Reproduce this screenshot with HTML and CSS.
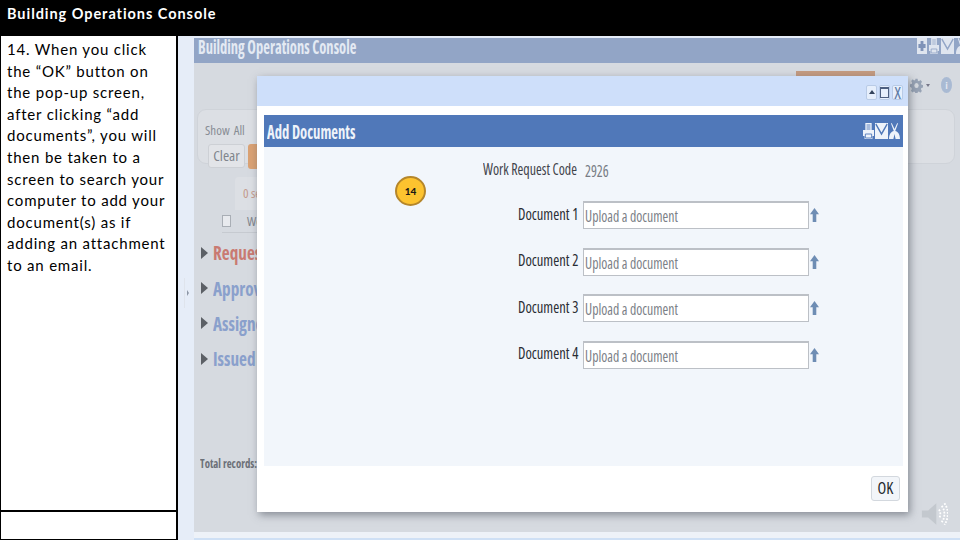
FILE: index.html
```html
<!DOCTYPE html>
<html lang="en">
<head>
<meta charset="utf-8">
<title>Building Operations Console</title>
<link rel="stylesheet" href="styles.css">
</head>
<body>
<div class="slide">
  <header class="slide-head">Building Operations Console</header>
  <div class="slide-body">
    <aside class="notes">
      <div class="notes-main">14. When you click the “OK” button on the pop-up screen, after clicking “add documents”, you will then be taken to a screen to search your computer to add your document(s) as if adding an attachment to an email.</div>
      <div class="notes-foot"></div>
    </aside>
    <main class="shot">
      <div class="rail"><span class="rail-handle"></span></div>
      <div class="app">
        <div class="app-title">
          <span class="narrow app-title-text">Building Operations Console</span>
          <span class="app-icons">
            <svg class="icon-s" viewBox="0 0 14 16" preserveAspectRatio="none"><rect width="14" height="16" fill="#dfe5ef"/><path d="M5 3h4v3h3v4H9v3H5v-3H2V6h3z" fill="#7f93b8"/></svg>
            <svg class="icon-s" viewBox="0 0 14 16" preserveAspectRatio="none"><path d="M3 0h8v7h3v6h-2v3H2v-3H0V7h3z" fill="#dfe5ef"/><path d="M4.500 2h5M4.500 4h5M4.500 6h5M3 11h8v4H3z" fill="none" stroke="#92a5c6"/></svg>
            <svg class="icon-s wide" viewBox="0 0 16 16" preserveAspectRatio="none"><rect width="16" height="16" fill="#dfe5ef"/><path d="M1 1l7 10 7-10" fill="none" stroke="#92a5c6" stroke-width="1.6"/></svg>
            <svg class="icon-s" viewBox="0 0 12 16" preserveAspectRatio="none"><path d="M3 0l3 6 3-6 .8.500L6.800 8C9.500 8.500 12 11 12 16H7.200L6 11l-1.200 5H0c0-5 2.500-7.500 5.200-8L2.200.5z" fill="#dfe5ef"/></svg>
          </span>
        </div>
        <div class="app-body">
          <div class="orange-tab"></div>
          <div class="tools">
            <svg class="gear" viewBox="0 0 24 24" preserveAspectRatio="none"><path d="M10 1h4l.6 3.2 2 .8L19.300 3.200l2.800 2.800-1.800 2.700.8 2 3 .6v4l-3.200.6-.8 2 1.800 2.700-2.800 2.800-2.700-1.800-2 .8-.6 3h-4l-.6-3.200-2-.8-2.700 1.800-2.800-2.800 1.800-2.700-.8-2L0 14v-4l3.200-.6.800-2L2.200 4.700 5 2l2.700 1.800 2-.8z" fill="#97a3b5"/><circle cx="12" cy="12" r="4" fill="#d6dae0"/></svg>
            <span class="caret"></span>
            <span class="info"><span class="info-i">i</span></span>
          </div>
          <section class="filter">
            <div class="filter-row narrow"><span>Show</span><span>All</span></div>
            <div class="filter-btns">
              <span class="btn-clear narrow">Clear</span>
              <span class="btn-orange"></span>
            </div>
          </section>
          <div class="sel narrow">0 selected</div>
          <div class="col-row narrow"><span class="check"></span><span>Work</span></div>
          <ul class="groups narrow">
            <li class="red"><i class="tri"></i><span class="squeeze">Requests</span></li>
            <li><i class="tri"></i><span class="squeeze">Approved</span></li>
            <li><i class="tri"></i><span class="squeeze">Assigned</span></li>
            <li><i class="tri"></i><span class="squeeze">Issued and</span></li>
          </ul>
          <div class="total narrow">Total records:</div>
        </div>
        <div class="app-foot"></div>
      </div>
      <section class="modal">
        <div class="modal-bar">
          <span class="win-btn"><i class="win-up"></i></span>
          <span class="win-btn"><i class="win-max"></i></span>
          <span class="win-btn narrow win-x">X</span>
        </div>
        <div class="modal-sheet">
          <div class="panel">
            <div class="panel-head">
              <span class="narrow panel-title">Add Documents</span>
              <span class="panel-icons">
                <svg class="picon" viewBox="0 0 14 16" preserveAspectRatio="none"><path d="M3 0h8v7h3v6h-2v3H2v-3H0V7h3z" fill="#eef3fa"/><path d="M4.500 2h5M4.500 4h5M4.500 6h5M3 11h8v4H3z" fill="none" stroke="#5078b9"/></svg>
                <svg class="picon wide" viewBox="0 0 16 16" preserveAspectRatio="none"><rect width="16" height="16" fill="#eef3fa"/><path d="M1 1l7 10 7-10" fill="none" stroke="#5078b9" stroke-width="1.6"/></svg>
                <svg class="picon" viewBox="0 0 12 16" preserveAspectRatio="none"><path d="M3 0l3 6 3-6 .8.500L6.800 8C9.500 8.500 12 11 12 16H7.200L6 11l-1.200 5H0c0-5 2.500-7.500 5.200-8L2.200.5z" fill="#eef3fa"/></svg>
              </span>
            </div>
            <form class="form">
              <div class="code-row narrow"><span class="code-label"><span class="squeeze">Work Request Code</span></span><span class="code-val"><span class="squeeze">2926</span></span></div>
              <div class="doc-row"><label class="narrow doc-label">Document 1</label><span class="doc-input narrow"><span class="squeeze">Upload a document</span></span><svg class="up" viewBox="0 0 10 16" preserveAspectRatio="none"><path d="M5 0l5 7H7v9H3V7H0z" fill="#6e8db4"/></svg></div>
              <div class="doc-row"><label class="narrow doc-label">Document 2</label><span class="doc-input narrow"><span class="squeeze">Upload a document</span></span><svg class="up" viewBox="0 0 10 16" preserveAspectRatio="none"><path d="M5 0l5 7H7v9H3V7H0z" fill="#6e8db4"/></svg></div>
              <div class="doc-row"><label class="narrow doc-label">Document 3</label><span class="doc-input narrow"><span class="squeeze">Upload a document</span></span><svg class="up" viewBox="0 0 10 16" preserveAspectRatio="none"><path d="M5 0l5 7H7v9H3V7H0z" fill="#6e8db4"/></svg></div>
              <div class="doc-row"><label class="narrow doc-label">Document 4</label><span class="doc-input narrow"><span class="squeeze">Upload a document</span></span><svg class="up" viewBox="0 0 10 16" preserveAspectRatio="none"><path d="M5 0l5 7H7v9H3V7H0z" fill="#6e8db4"/></svg></div>
            </form>
          </div>
          <div class="modal-foot"><span class="ok narrow">OK</span></div>
        </div>
      </section>
      <div class="badge">14</div>
      <svg class="speaker" viewBox="0 0 30 28"><path d="M1 10h7l9-8v24l-9-8H1z" fill="#c3c8ce"/><g fill="none" stroke="#fff" stroke-width="2" stroke-dasharray="2 1.500"><path d="M20 9c2 3 2 7 0 10"/><path d="M23 5c4 5 4 13 0 18"/><path d="M26 2c5 7 5 17 0 24"/></g></svg>
    </main>
  </div>
</div>
</body>
</html>
```
FILE: styles.css
```css
* { box-sizing: border-box; }
html, body { margin: 0; padding: 0; }
body { width: 960px; height: 540px; overflow: hidden; background: #000; font-family: Lato, "Open Sans", sans-serif; }
.slide { width: 960px; height: 540px; display: flex; flex-direction: column; background: #000; }
.slide-head { height: 36px; flex: none; padding: 4px 7px 0; color: #fff; font-size: 14.500px; font-weight: 700; line-height: 20px; letter-spacing: .95px; }
.slide-body { flex: 1; display: flex; min-height: 0; }

.notes { width: 178px; flex: none; display: flex; flex-direction: column; background: #fff; border-left: 1px solid #000; border-right: 2px solid #000; border-bottom: 1px solid #000; }
.notes-main { height: 476px; flex: none; padding: 3px 5px 0 6px; font-size: 15px; line-height: 21.600px; letter-spacing: .8px; color: #000; border-bottom: 2px solid #000; }
.notes-foot { flex: 1; }

.shot { flex: 1; position: relative; display: flex; background: #e6edf8; padding-top: 2px; }
.rail { width: 16px; flex: none; display: flex; align-items: center; }
.rail-handle { position: relative; width: 5px; height: 30px; margin: 8px 0 0 6px; border-left: 1px solid #dfe4ec; }
.rail-handle::after { content: ""; position: absolute; left: 2px; top: 12px; border-top: 3px solid transparent; border-bottom: 3px solid transparent; border-left: 2px solid #8d97a6; }
.app { flex: 1; display: flex; flex-direction: column; min-width: 0; }
.app-title { height: 25px; flex: none; background: #92a5c6; display: flex; justify-content: space-between; padding-left: 4px; }
.narrow { display: inline-block; font-family: "Open Sans", sans-serif; font-stretch: 75%; }
.squeeze { display: inline-block; transform: scaleX(.86); transform-origin: left center; white-space: nowrap; }
.app-title-text { color: #e4eaf3; font-size: 19px; font-weight: 700; line-height: 26px; height: 26px; margin-top: -4px; white-space: nowrap; transform: scaleX(.765); transform-origin: left center; }
.app-icons { display: flex; gap: 2px; flex: none; margin-right: -6px; }
.icon-s { width: 10px; height: 16px; }
.icon-s.wide { width: 13px; }
.app-body { flex: 1; position: relative; background: #d6dae0; }
.app-foot { height: 8px; flex: none; background: #eef2f8; border-bottom: 2px solid #cfe0f5; }
.orange-tab { position: absolute; left: 602px; top: 8px; width: 79px; height: 8px; background: #c59b81; }
.tools { position: absolute; left: 716px; top: 14px; display: flex; align-items: center; gap: 3px; }
.gear { width: 13px; height: 15px; }
.caret { width: 0; height: 0; border-left: 2.500px solid transparent; border-right: 2.500px solid transparent; border-top: 3px solid #778; margin-right: 8px; }
.info { width: 11px; height: 16px; border-radius: 50%; background: #a9bad3; display: flex; align-items: center; justify-content: center; }
.info-i { font-size: 10px; line-height: 1; color: #e4e9f1; font-weight: 700; }
.filter { position: absolute; left: 3px; top: 46px; width: 758px; height: 55px; background: #dcdfe4; border: 1px solid #cfd3d9; border-radius: 9px; padding: 13px 0 0 7px; }
.filter-row { display: flex; gap: 4px; color: #888d95; font-size: 13px; line-height: 15px; }
.filter-btns { display: flex; gap: 3px; margin-top: 6px; margin-left: 3px; }
.btn-clear { width: 37px; height: 24px; background: #e2e4e8; border: 1px solid #cdd0d5; border-radius: 3px; color: #80858c; font-size: 15px; line-height: 21px; text-align: center; }
.btn-orange { width: 20px; height: 25px; background: #daa274; border-radius: 3px; }
.sel { position: absolute; left: 41px; top: 114px; width: 40px; height: 33px; background: #dcdfe4; border-radius: 4px 4px 0 0; padding: 7px 0 0 8px; color: #c49a8c; font-size: 13px; white-space: nowrap; }
.col-row { position: absolute; left: 28px; top: 147px; width: 60px; height: 23px; display: flex; gap: 16px; align-items: center; color: #7f848c; font-size: 13px; border-bottom: 1px solid #c6cad0; }
.check { width: 9px; height: 12px; background: #e8eaee; border: 1px solid #a9aeb5; }
.groups { position: absolute; left: 7px; top: 172px; margin: 0; padding: 0; list-style: none; display: block; }
.groups li { height: 35.400px; display: flex; align-items: center; gap: 5px; color: #8aa0cc; font-size: 20px; font-weight: 700; white-space: nowrap; }
.groups li.red { color: #c97a72; }
.tri { width: 0; height: 0; flex: none; border-top: 6px solid transparent; border-bottom: 6px solid transparent; border-left: 7px solid #5c6066; }
.total { position: absolute; left: 6px; top: 392px; color: #6c7078; font-size: 12px; font-weight: 700; white-space: nowrap; transform: scaleX(.9); transform-origin: left center; }

.modal { position: absolute; left: 79px; top: 40px; width: 651px; height: 436px; background: #fff; display: flex; flex-direction: column; box-shadow: 2px 3px 8px rgba(70,75,85,.55); }
.modal-bar { height: 30px; flex: none; background: #cedffa; display: flex; justify-content: flex-end; align-items: center; gap: 2px; padding: 0 5px 0 0; }
.win-btn { width: 11px; height: 15px; margin-top: 2px; background: #e6effc; border: 1px solid #b9cbe6; border-radius: 2px; display: flex; align-items: center; justify-content: center; color: #5f7ba6; }
.win-up { width: 0; height: 0; border-left: 3px solid transparent; border-right: 3px solid transparent; border-bottom: 4px solid #33435c; }
.win-max { width: 9px; height: 11px; border: 1px solid #4d5f80; border-top-width: 2px; }
.win-x { font-size: 17px; line-height: 13px; text-align: center; }
.modal-sheet { flex: 1; display: flex; flex-direction: column; padding: 9px 5px 0 7px; min-height: 0; }
.panel { height: 351px; flex: none; background: #f2f6fb; display: flex; flex-direction: column; }
.panel-head { height: 32px; flex: none; background: #5078b9; display: flex; justify-content: space-between; align-items: center; padding: 2px 3px 0 3px; }
.panel-title { color: #eef3fa; font-size: 19px; font-weight: 700; white-space: nowrap; transform: scaleX(.77); transform-origin: left center; }
.panel-icons { display: flex; gap: 1px; margin-top: -2px; }
.picon { width: 11px; height: 16px; }
.picon.wide { width: 13px; }
.form { display: flex; flex-direction: column; padding: 10px 0 0 219px; }
.code-row { height: 25px; display: flex; align-items: center; white-space: nowrap; }
.code-label { width: 102px; color: #3f434a; font-size: 16px; margin-top: -2px; }
.code-val { color: #777c84; font-size: 16px; margin-top: 2px; }
.code-row .squeeze { transform: scaleX(.87); }
.doc-row { height: 28px; margin-top: 18.600px; display: flex; align-items: center; }
.code-row + .doc-row { margin-top: 19px; }
.doc-label { width: 99px; text-align: right; padding: 0 4px 3px 0; color: #2a2d33; font-size: 16px; white-space: nowrap; transform: scaleX(.91); transform-origin: right center; }
.doc-input { width: 226px; margin-left: 1px; height: 28px; background: #fff; border: 1px solid #bcc0c6; border-top-width: 2px; padding-left: 1px; color: #7b8087; font-size: 16px; line-height: 27px; white-space: nowrap; overflow: hidden; }
.up { width: 9px; height: 14px; margin-left: 1px; }
.modal-foot { flex: 1; display: flex; justify-content: flex-end; align-items: flex-start; padding: 10px 3px 0 0; }
.ok { width: 29px; height: 25px; background: #f2f5f9; border: 1px solid #d3d8de; border-radius: 3px; color: #22262b; font-size: 16px; line-height: 22px; text-align: center; }
.badge { position: absolute; left: 217px; top: 140px; width: 31px; height: 30px; border-radius: 50%; background: #fdc32f; border: 2px solid #b5862a; color: #1c1a14; font-size: 10px; font-weight: 900; line-height: 26px; text-align: center; }
.speaker { position: absolute; left: 743px; top: 465px; width: 27px; height: 26px; }
```
